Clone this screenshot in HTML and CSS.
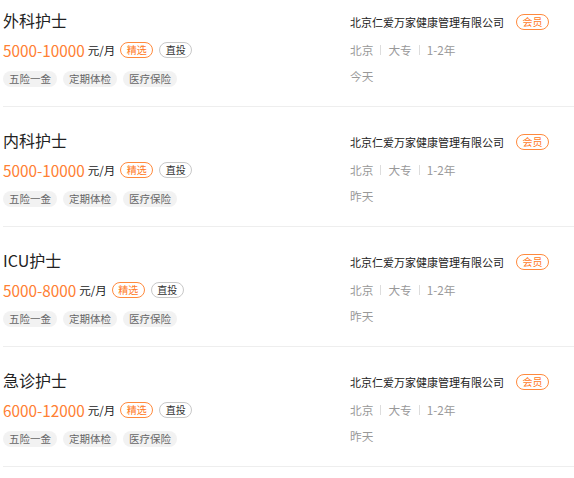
FILE: index.html
```html
<!DOCTYPE html>
<html lang="zh-CN">
<head>
  <meta charset="UTF-8">
  <title>护士职位列表</title>
  <link rel="stylesheet" href="styles.css">
</head>
<body>
  <ul class="job-list">
    <li class="job">
      <div class="job-main">
        <div class="job-title">外科护士</div>
        <div class="job-salary">
          <span class="salary">5000-10000</span>
          <span class="unit">元/月</span>
          <span class="badge badge-orange">精选</span>
          <span class="badge badge-gray">直投</span>
        </div>
        <div class="welfare">
          <span>五险一金</span><span>定期体检</span><span>医疗保险</span>
        </div>
      </div>
      <div class="job-side">
        <div class="company">北京仁爱万家健康管理有限公司<span class="badge badge-orange">会员</span></div>
        <div class="meta">北京<i></i>大专<i></i>1-2年</div>
        <div class="time">今天</div>
      </div>
    </li>
    <li class="job">
      <div class="job-main">
        <div class="job-title">内科护士</div>
        <div class="job-salary">
          <span class="salary">5000-10000</span>
          <span class="unit">元/月</span>
          <span class="badge badge-orange">精选</span>
          <span class="badge badge-gray">直投</span>
        </div>
        <div class="welfare">
          <span>五险一金</span><span>定期体检</span><span>医疗保险</span>
        </div>
      </div>
      <div class="job-side">
        <div class="company">北京仁爱万家健康管理有限公司<span class="badge badge-orange">会员</span></div>
        <div class="meta">北京<i></i>大专<i></i>1-2年</div>
        <div class="time">昨天</div>
      </div>
    </li>
    <li class="job">
      <div class="job-main">
        <div class="job-title">ICU护士</div>
        <div class="job-salary">
          <span class="salary">5000-8000</span>
          <span class="unit">元/月</span>
          <span class="badge badge-orange">精选</span>
          <span class="badge badge-gray">直投</span>
        </div>
        <div class="welfare">
          <span>五险一金</span><span>定期体检</span><span>医疗保险</span>
        </div>
      </div>
      <div class="job-side">
        <div class="company">北京仁爱万家健康管理有限公司<span class="badge badge-orange">会员</span></div>
        <div class="meta">北京<i></i>大专<i></i>1-2年</div>
        <div class="time">昨天</div>
      </div>
    </li>
    <li class="job">
      <div class="job-main">
        <div class="job-title">急诊护士</div>
        <div class="job-salary">
          <span class="salary">6000-12000</span>
          <span class="unit">元/月</span>
          <span class="badge badge-orange">精选</span>
          <span class="badge badge-gray">直投</span>
        </div>
        <div class="welfare">
          <span>五险一金</span><span>定期体检</span><span>医疗保险</span>
        </div>
      </div>
      <div class="job-side">
        <div class="company">北京仁爱万家健康管理有限公司<span class="badge badge-orange">会员</span></div>
        <div class="meta">北京<i></i>大专<i></i>1-2年</div>
        <div class="time">昨天</div>
      </div>
    </li>
  </ul>
</body>
</html>
```

FILE: styles.css
```css
body {
  margin: 0;
  font-family: "Noto Sans CJK SC", "Noto Sans", sans-serif;
  color: #333;
  background: #fff;
  overflow: hidden;
}
.job-list {
  list-style: none;
  margin: -13px 0 0 3px;
  padding: 0;
}
.job {
  display: flex;
  height: 119px;
  border-bottom: 1px solid #eee;
  box-sizing: content-box;
}
.job-main {
  flex: 1;
  padding-top: 20px;
}
.job-title {
  font-size: 16px;
  line-height: 26px;
  color: #222;
}
.job-salary {
  display: flex;
  align-items: center;
  margin-top: 6px;
  height: 22px;
}
.salary {
  font-size: 15.3px;
  color: #ff8033;
}
.unit {
  font-size: 11.5px;
  color: #222;
  margin-left: 3px;
  margin-right: 5px;
}
.badge {
  display: inline-flex;
  align-items: center;
  justify-content: center;
  width: 31px;
  height: 14px;
  border-radius: 8px;
  font-size: 10px;
  line-height: 14px;
  margin-right: 6px;
}
.badge-orange {
  border: 1px solid #ff8a3d;
  color: #ff7a26;
}
.badge-gray {
  border: 1px solid #c8c8c8;
  color: #333;
}
.welfare {
  display: flex;
  gap: 6px;
  margin-top: 10px;
}
.welfare span {
  background: #f2f2f2;
  color: #666;
  font-size: 10.5px;
  line-height: 16px;
  height: 16px;
  padding: 0 6px;
  border-radius: 8px;
}
.job-side {
  width: 224px;
  padding-top: 25px;
  font-size: 11.7px;
}
.company {
  display: flex;
  align-items: center;
  line-height: 20px;
  font-size: 11px;
  color: #222;
}
.company .badge {
  margin-left: 12px;
}
.meta {
  display: flex;
  align-items: center;
  margin-top: 8px;
  line-height: 20px;
  color: #999;
}
.meta i {
  display: inline-block;
  width: 1px;
  height: 10px;
  background: #ddd;
  margin: 0 7px;
}
.time {
  margin-top: 6px;
  line-height: 20px;
  color: #999;
}
```
